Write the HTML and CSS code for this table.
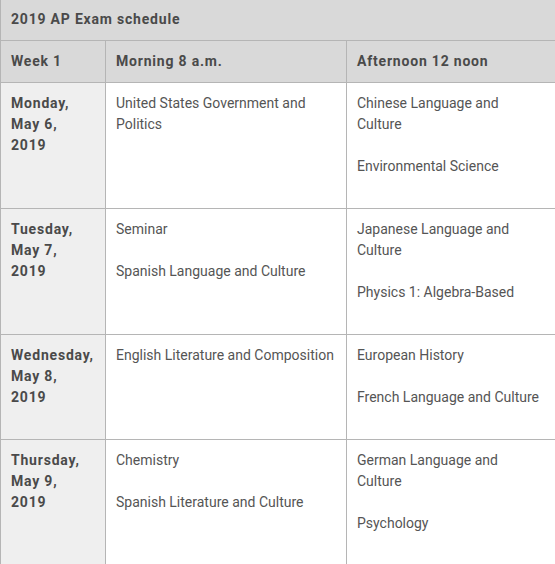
FILE: index.html
```html
<!DOCTYPE html>
<html>
<head>
<meta charset="utf-8">
<link rel="stylesheet" href="styles.css">
</head>
<body>
<table class="schedule">
  <colgroup>
    <col class="c-day">
    <col class="c-morning">
    <col class="c-afternoon">
  </colgroup>
  <thead>
    <tr><th class="caption" colspan="3">2019 AP Exam schedule</th></tr>
    <tr class="head">
      <th>Week 1</th>
      <th>Morning 8 a.m.</th>
      <th class="last">Afternoon 12 noon</th>
    </tr>
  </thead>
  <tbody>
    <tr>
      <th class="day">Monday, May 6, 2019</th>
      <td><p>United States Government and Politics</p></td>
      <td class="last"><p>Chinese Language and Culture</p><p>Environmental Science</p></td>
    </tr>
    <tr>
      <th class="day">Tuesday, May 7, 2019</th>
      <td><p>Seminar</p><p>Spanish Language and Culture</p></td>
      <td class="last"><p>Japanese Language and Culture</p><p>Physics 1: Algebra-Based</p></td>
    </tr>
    <tr>
      <th class="day">Wednesday, May 8, 2019</th>
      <td><p>English Literature and Composition</p></td>
      <td class="last"><p>European History</p><p>French Language and Culture</p></td>
    </tr>
    <tr>
      <th class="day">Thursday, May 9, 2019</th>
      <td><p>Chemistry</p><p>Spanish Literature and Culture</p></td>
      <td class="last"><p>German Language and Culture</p><p>Psychology</p></td>
    </tr>
  </tbody>
</table>
</body>
</html>
```
FILE: styles.css
```css
html, body {
  margin: 0;
  padding: 0;
  background: #ffffff;
  overflow: hidden;
}
body {
  font-family: Roboto, "Liberation Sans", sans-serif;
  font-size: 14px;
  line-height: 21px;
  color: #555555;
}
.schedule {
  border-collapse: collapse;
  table-layout: fixed;
  width: 584px;
}
.c-day { width: 105px; }
.c-morning { width: 241px; }
.c-afternoon { width: 238px; }
.schedule th,
.schedule td {
  border: 1px solid #b5b5b5;
  padding: 10px 10px;
  vertical-align: top;
  text-align: left;
}
.schedule .last {
  padding-right: 40px;
}
.schedule .caption {
  background: #d9d9d9;
  border-top: none;
  padding: 9px 10px 10px;
  font-weight: bold;
  letter-spacing: 0.8px;
  color: #4a4a4a;
}
.head th {
  background: #d9d9d9;
  font-weight: bold;
  letter-spacing: 0.8px;
  color: #4a4a4a;
}
.schedule .day {
  background: #efefef;
  font-weight: bold;
  letter-spacing: 0.8px;
  color: #4a4a4a;
}
.schedule p {
  margin: 0 0 21px;
}
```
